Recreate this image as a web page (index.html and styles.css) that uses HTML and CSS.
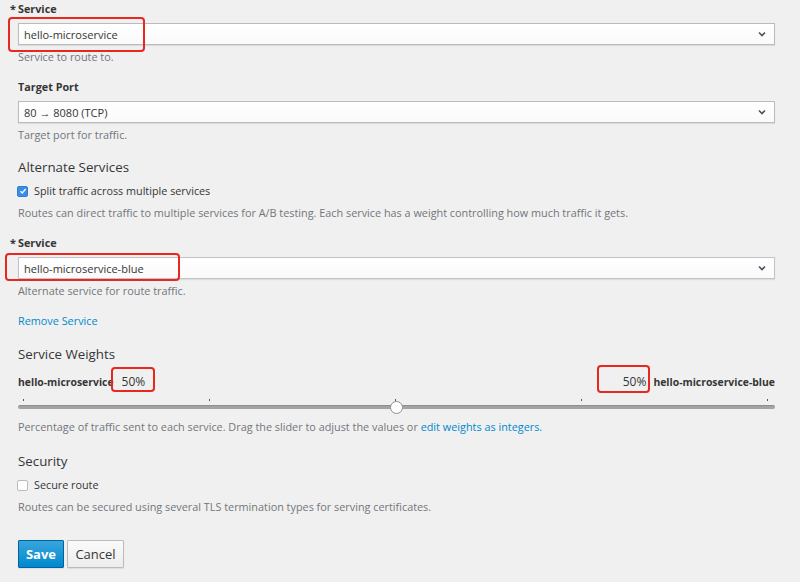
FILE: index.html
```html
<!DOCTYPE html>
<html>
<head>
<meta charset="utf-8">
<link rel="stylesheet" href="styles.css">
</head>
<body>
<div class="page">
  <form class="form">
    <div class="field first">
      <label class="label"><span class="req">*</span>Service</label>
      <div class="select"><span>hello-microservice</span><svg class="chev" width="8" height="6" viewBox="0 0 8 6"><path d="M1 1.5 L4 4.5 L7 1.5" fill="none" stroke="#4d5258" stroke-width="1.6"/></svg></div>
      <div class="help">Service to route to.</div>
    </div>
    <div class="field">
      <label class="label">Target Port</label>
      <div class="select"><span>80 → 8080 (TCP)</span><svg class="chev" width="8" height="6" viewBox="0 0 8 6"><path d="M1 1.5 L4 4.5 L7 1.5" fill="none" stroke="#4d5258" stroke-width="1.6"/></svg></div>
      <div class="help">Target port for traffic.</div>
    </div>

    <h3 class="section alt">Alternate Services</h3>
    <div class="check-row"><span class="box checked"><svg width="8" height="8" viewBox="0 0 8 8"><path d="M1.5 4.2 L3.3 6 L6.6 2" fill="none" stroke="#fff" stroke-width="1.3"/></svg></span>Split traffic across multiple services</div>
    <div class="help help-check">Routes can direct traffic to multiple services for A/B testing. Each service has a weight controlling how much traffic it gets.</div>

    <div class="field">
      <label class="label"><span class="req">*</span>Service</label>
      <div class="select focus"><span>hello-microservice-blue</span><svg class="chev" width="8" height="6" viewBox="0 0 8 6"><path d="M1 1.5 L4 4.5 L7 1.5" fill="none" stroke="#4d5258" stroke-width="1.6"/></svg></div>
      <div class="help">Alternate service for route traffic.</div>
    </div>
    <a class="link remove">Remove Service</a>

    <h3 class="section">Service Weights</h3>
    <div class="weights">
      <div class="weight"><b>hello-microservice</b><span class="pct">50%</span></div>
      <div class="weight right"><span class="pct">50%</span><b>hello-microservice-blue</b></div>
    </div>
    <div class="slider">
      <div class="ticks"><i></i><i></i><i></i><i></i><i></i></div>
      <div class="track"></div>
      <span class="thumb"></span>
    </div>
    <div class="help help-slider">Percentage of traffic sent to each service. Drag the slider to adjust the values or <a class="link">edit weights as integers.</a></div>

    <h3 class="section security">Security</h3>
    <div class="check-row"><span class="box"></span>Secure route</div>
    <div class="help help-check">Routes can be secured using several TLS termination types for serving certificates.</div>

    <div class="buttons">
      <button type="button" class="btn primary">Save</button>
      <button type="button" class="btn">Cancel</button>
    </div>
  </form>

  <span class="mark m1"></span>
  <span class="mark m2"></span>
  <span class="mark m3"></span>
  <span class="mark m4"></span>
</div>
</body>
</html>
```

FILE: styles.css
```css
html, body {
  margin: 0;
  padding: 0;
  background: #f0f0f0;
}
body {
  font-family: "Open Sans", "Liberation Sans", sans-serif;
  font-size: 10.85px;
  color: #363636;
}
.page {
  position: relative;
  width: 800px;
  height: 582px;
  overflow: hidden;
}
.form {
  padding: 2px 25px 0 18px;
  margin: 0;
}
.field { margin-top: 16px; }
.field.first { margin-top: 0; }
.label {
  display: block;
  font-weight: 700;
  font-size: 10.8px;
  line-height: 14px;
  height: 14px;
  margin-bottom: 7px;
}
.req {
  display: inline-block;
  width: 8px;
  margin-left: -8px;
}
.select {
  box-sizing: border-box;
  height: 22px;
  display: flex;
  align-items: center;
  justify-content: space-between;
  padding: 0 8px 0 5px;
  background: linear-gradient(#ffffff, #fafafa);
  border: 1px solid #bbbbbb;
  box-shadow: 0 1px 1px rgba(3,3,3,0.08);
  font-size: 11px;
  color: #363636;
}
.select.focus { border-color: #bdc5cc; }
.chev { display: block; }
.help {
  color: #72767b;
  line-height: 14px;
  margin-top: 5px;
}
.section {
  font-size: 13.3px;
  font-weight: 400;
  line-height: 18px;
  margin: 17px 0 0 0;
}
.section.alt { margin-top: 16px; }
.check-row {
  display: flex;
  align-items: center;
  line-height: 14px;
  margin-top: 8px;
  font-size: 10.8px;
}
.box {
  box-sizing: border-box;
  width: 11px;
  height: 11px;
  margin: 0 6px 0 -1px;
  border: 1px solid #bbbbbb;
  border-radius: 2px;
  background: #fff;
  display: flex;
  align-items: center;
  justify-content: center;
}
.box.checked {
  background: #3a8ee6;
  border-color: #2f7fd6;
}
.help-check { margin-top: 8px; }
.link {
  color: #0088ce;
  text-decoration: none;
}
.remove {
  display: block;
  line-height: 14px;
  margin-top: 16px;
}
.weights {
  display: flex;
  justify-content: space-between;
  align-items: center;
  margin-top: 12px;
  line-height: 14px;
}
.weight { display: flex; align-items: center; }
.weight b { font-size: 10.4px; }
.weight .pct { font-size: 12px; margin-left: 8px; }
.weight.right .pct { margin-left: 0; margin-right: 7px; }
.slider {
  position: relative;
  height: 20px;
  margin-top: 5px;
}
.ticks {
  display: flex;
  justify-content: space-between;
  padding: 0 7px 0 5px;
  height: 7px;
  align-items: flex-end;
}
.ticks i {
  width: 1px;
  height: 2px;
  background: #555;
}
.track {
  margin-top: 4px;
  height: 3px;
  border-radius: 2px;
  background: #a3a3a3;
  border-top: 1px solid #8e8e8e;
}
.thumb {
  position: absolute;
  left: 372px;
  top: 7px;
  width: 11px;
  height: 11px;
  border-radius: 50%;
  background: #fff;
  border: 1px solid #8f8f8f;
}
.help-slider { margin-top: 6px; }
.security { margin-top: 18px; }
.buttons {
  display: flex;
  gap: 3px;
  margin-top: 26px;
}
.btn {
  font-family: inherit;
  font-size: 13px;
  height: 28px;
  width: 57px;
  padding: 0;
  border: 1px solid #bbbbbb;
  border-radius: 1px;
  background: linear-gradient(#fafafa, #ededed);
  color: #363636;
  box-shadow: 0 1px 1px rgba(0,0,0,0.08);
}
.btn.primary {
  width: 46px;
  font-weight: 700;
  color: #fff;
  background: linear-gradient(#39a5dc, #0088ce);
  border-color: #00659c;
}
.mark {
  position: absolute;
  box-sizing: border-box;
  border: 2px solid #e8271f;
  border-radius: 4px;
}
.m1 { left: 8px; top: 17px; width: 137px; height: 35px; }
.m2 { left: 5px; top: 253px; width: 175px; height: 28px; }
.m3 { left: 111px; top: 367px; width: 44px; height: 25px; }
.m4 { left: 597px; top: 365px; width: 53px; height: 28px; }
```
